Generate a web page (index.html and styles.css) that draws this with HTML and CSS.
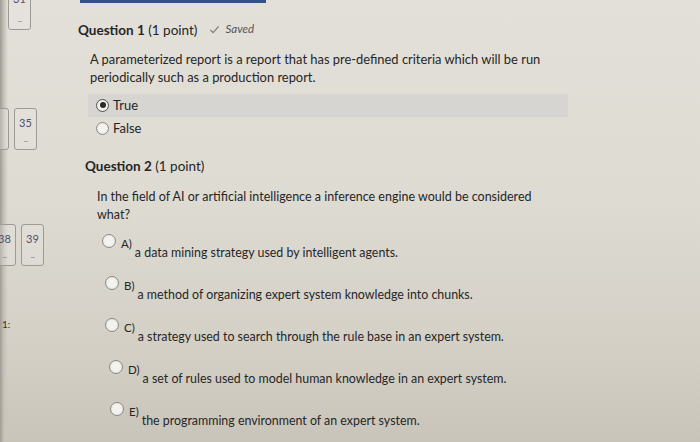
FILE: index.html
```html
<!DOCTYPE html>
<html>
<head>
<meta charset="utf-8">
<link rel="stylesheet" href="styles.css">
</head>
<body>
<div class="page">
  <aside class="sidebar">
    <div class="tile-row row1">
      <div class="tile t31"><span class="num">31</span><span class="dash">--</span></div>
    </div>
    <div class="tile-row row2">
      <div class="tile partial"><span class="num"></span><span class="dash">--</span></div>
      <div class="tile"><span class="num">35</span><span class="dash">--</span></div>
    </div>
    <div class="tile-row row3">
      <div class="tile part38"><span class="num">38</span><span class="dash">--</span></div>
      <div class="tile"><span class="num">39</span><span class="dash">--</span></div>
    </div>
    <div class="side-label">1:</div>
  </aside>
  <main class="main">
    <div class="topbar"></div>
    <section class="q1">
      <h2 class="qhead"><b>Question 1</b> (1 point)<span class="saved"><svg class="check" viewBox="0 0 12 12" width="11" height="11"><path d="M1.5 6.5 L4.5 9.5 L10.5 2.5" fill="none" stroke="#7d7d7d" stroke-width="1.3"/></svg><i>Saved</i></span></h2>
      <p class="qtext">A parameterized report is a report that has pre-defined criteria which will be run periodically such as a production report.</p>
      <div class="tf">
        <div class="tf-row selected"><span class="radio on"></span><span>True</span></div>
        <div class="tf-row"><span class="radio"></span><span>False</span></div>
      </div>
    </section>
    <section class="q2">
      <h2 class="qhead"><b>Question 2</b> (1 point)</h2>
      <p class="qtext q2text">In the field of AI or artificial intelligence a inference engine would be considered what?</p>
      <div class="opts">
        <div class="opt oa"><span class="radio"></span><span class="lbl">A)</span><span class="otext">a data mining strategy used by intelligent agents.</span></div>
        <div class="opt ob"><span class="radio"></span><span class="lbl">B)</span><span class="otext">a method of organizing expert system knowledge into chunks.</span></div>
        <div class="opt oc"><span class="radio"></span><span class="lbl">C)</span><span class="otext">a strategy used to search through the rule base in an expert system.</span></div>
        <div class="opt od"><span class="radio"></span><span class="lbl">D)</span><span class="otext">a set of rules used to model human knowledge in an expert system.</span></div>
        <div class="opt oe"><span class="radio"></span><span class="lbl">E)</span><span class="otext">the programming environment of an expert system.</span></div>
      </div>
    </section>
  </main>
</div>
</body>
</html>
```
FILE: styles.css
```css
html, body {
  margin: 0;
  padding: 0;
  width: 700px;
  height: 442px;
  overflow: hidden;
}
body {
  font-family: Lato, "Open Sans", "Liberation Sans", sans-serif;
  color: #262626;
  background:
    linear-gradient(90deg, #9f9c95 0px, #c7c3ba 4px, rgba(0,0,0,0) 8px),
    linear-gradient(180deg, #e3e0d9 0%, #dedbd3 45%, #d3cfc5 80%, #c9c4b9 100%);
}
.page {
  display: flex;
  height: 442px;
}
.sidebar {
  width: 70px;
  flex: none;
}
.tile-row {
  display: flex;
  gap: 5px;
}
.row1 { margin-top: -8px; padding-left: 8px; }
.row2 { margin-top: 78px; margin-left: -14px; }
.row3 { margin-top: 74px; margin-left: -7px; }
.tile {
  width: 23px;
  height: 42px;
  border: 1px solid #9c9a94;
  border-radius: 3px;
  display: flex;
  flex-direction: column;
  align-items: center;
  box-sizing: border-box;
  padding-top: 8px;
  background: rgba(235,233,228,0.3);
}
.num {
  font-size: 11px;
  color: #4d5170;
  line-height: 12px;
  height: 12px;
}
.dash {
  font-size: 7px;
  color: #6a6d80;
  margin-top: 8px;
  letter-spacing: -0.5px;
}
.t31 { height: 38px; padding-top: 0; }
.t31 .num { margin-top: 0; }
.t31 .dash { margin-top: 12px; }
.side-label {
  margin-top: 52px;
  padding-left: 2px;
  font-size: 10px;
  color: #333;
}
.main {
  flex: 1;
  position: relative;
  padding-left: 8px;
}
.topbar {
  position: absolute;
  left: 10px;
  top: 0;
  width: 186px;
  height: 3px;
  background: #34508a;
}
.qhead {
  margin: 0;
  font-size: 13.5px;
  font-weight: 400;
  line-height: 18px;
}
.qhead b { font-weight: 700; }
.q1 { padding-top: 20px; }
.saved {
  display: inline-flex;
  align-items: center;
  gap: 5px;
  margin-left: 12px;
  font-size: 11.5px;
  color: #555;
}
.qtext {
  margin: 11px 0 0 12px;
  font-size: 12.9px;
  line-height: 18px;
  width: 465px;
}
.tf {
  margin: 8px 0 0 10px;
  width: 480px;
}
.tf-row {
  display: flex;
  align-items: center;
  gap: 4px;
  height: 23px;
  padding-left: 8px;
  font-size: 13px;
}
.tf-row.selected { background: #d6d5d1; }
.radio {
  width: 13px;
  height: 13px;
  border: 1px solid #8b8a86;
  border-radius: 50%;
  background: radial-gradient(circle, #f4f3ef 40%, #e3e1dc 100%);
  flex: none;
  box-sizing: border-box;
  display: inline-flex;
  align-items: center;
  justify-content: center;
}
.radio.on { border-color: #555; }
.radio.on::after {
  content: "";
  width: 6px;
  height: 6px;
  border-radius: 50%;
  background: #2a2a2a;
}
.q2 { padding: 17px 0 0 7px; }
.q2text {
  font-size: 12.5px;
  width: 450px;
  margin-top: 13px;
}
.opts { margin-top: 6px; }
.opt {
  display: flex;
  align-items: flex-start;
  font-size: 12.4px;
  height: 42px;
}
.opt .radio { margin-top: 4px; width: 14px; height: 14px; }
.lbl { margin-left: 5px; font-size: 11.5px; line-height: 14px; margin-top: 7px; }
.otext { margin-left: 3px; margin-top: 16px; line-height: 14px; }
.oa { margin-left: 17px; }
.ob { margin-left: 20px; }
.oc { margin-left: 20px; }
.od { margin-left: 24px; }
.oe { margin-left: 25px; }
```
